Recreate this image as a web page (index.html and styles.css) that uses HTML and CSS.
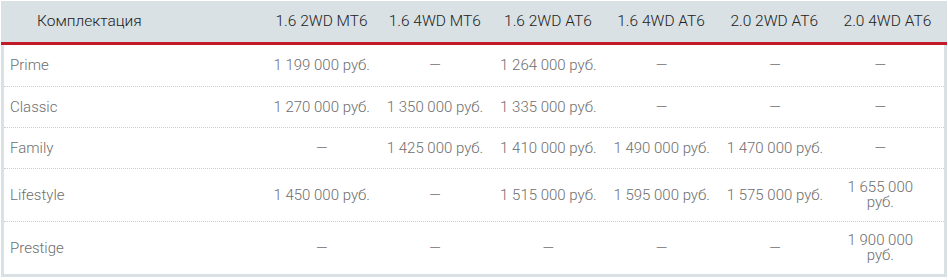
FILE: index.html
```html
<!DOCTYPE html>
<html lang="ru">
<head>
<meta charset="utf-8">
<link rel="stylesheet" href="styles.css">
</head>
<body>
<div class="prices">
  <div class="head">
    <div class="cell first">Комплектация</div>
    <div class="cell">1.6 2WD MT6</div>
    <div class="cell">1.6 4WD MT6</div>
    <div class="cell">1.6 2WD AT6</div>
    <div class="cell">1.6 4WD AT6</div>
    <div class="cell">2.0 2WD AT6</div>
    <div class="cell">2.0 4WD AT6</div>
  </div>
  <div class="body">
    <div class="row">
      <div class="cell first">Prime</div>
      <div class="cell">1 199 000 руб.</div>
      <div class="cell">—</div>
      <div class="cell">1 264 000 руб.</div>
      <div class="cell">—</div>
      <div class="cell">—</div>
      <div class="cell">—</div>
    </div>
    <div class="row">
      <div class="cell first">Classic</div>
      <div class="cell">1 270 000 руб.</div>
      <div class="cell">1 350 000 руб.</div>
      <div class="cell">1 335 000 руб.</div>
      <div class="cell">—</div>
      <div class="cell">—</div>
      <div class="cell">—</div>
    </div>
    <div class="row">
      <div class="cell first">Family</div>
      <div class="cell">—</div>
      <div class="cell">1 425 000 руб.</div>
      <div class="cell">1 410 000 руб.</div>
      <div class="cell">1 490 000 руб.</div>
      <div class="cell">1 470 000 руб.</div>
      <div class="cell">—</div>
    </div>
    <div class="row">
      <div class="cell first">Lifestyle</div>
      <div class="cell">1 450 000 руб.</div>
      <div class="cell">—</div>
      <div class="cell">1 515 000 руб.</div>
      <div class="cell">1 595 000 руб.</div>
      <div class="cell">1 575 000 руб.</div>
      <div class="cell">1 655 000 руб.</div>
    </div>
    <div class="row">
      <div class="cell first">Prestige</div>
      <div class="cell">—</div>
      <div class="cell">—</div>
      <div class="cell">—</div>
      <div class="cell">—</div>
      <div class="cell">—</div>
      <div class="cell">1 900 000 руб.</div>
    </div>
  </div>
</div>
</body>
</html>
```
FILE: styles.css
```css
html, body {
  margin: 0;
  background: #fff;
}
body {
  padding: 1px 0 0 1px;
  font-family: Roboto, "Noto Sans", Arial, sans-serif;
  font-size: 15px;
}
.prices {
  width: 946px;
}
.head {
  display: grid;
  grid-template-columns: 261px repeat(6, 1fr);
  background: #d9e1e4;
  border-bottom: 3px solid #c11b2a;
  padding: 0 3px;
  height: 41px;
  color: #222;
  font-weight: 300;
  font-size: 15.5px;
}
.head .cell {
  display: flex;
  align-items: center;
  justify-content: center;
  line-height: 15px;
}
.head .cell.first {
  justify-content: flex-start;
  padding-left: 33px;
}
.body {
  border: 3px solid #d9e1e4;
  border-top: 0;
  color: #6e6e6e;
  font-weight: 300;
}
.row {
  display: grid;
  grid-template-columns: 261px repeat(5, 113.33px) 1fr;
  padding-right: 15px;
  border-bottom: 1px dotted #c9d0d3;
  min-height: 40px;
}
.row:first-child {
  min-height: 41px;
}
.row:last-child {
  border-bottom: 0;
}
.row .cell {
  display: flex;
  align-items: center;
  justify-content: center;
  text-align: center;
  padding: 11px 7px;
  line-height: 15px;
}
.row .cell.first {
  justify-content: flex-start;
  padding-left: 6px;
}
```
